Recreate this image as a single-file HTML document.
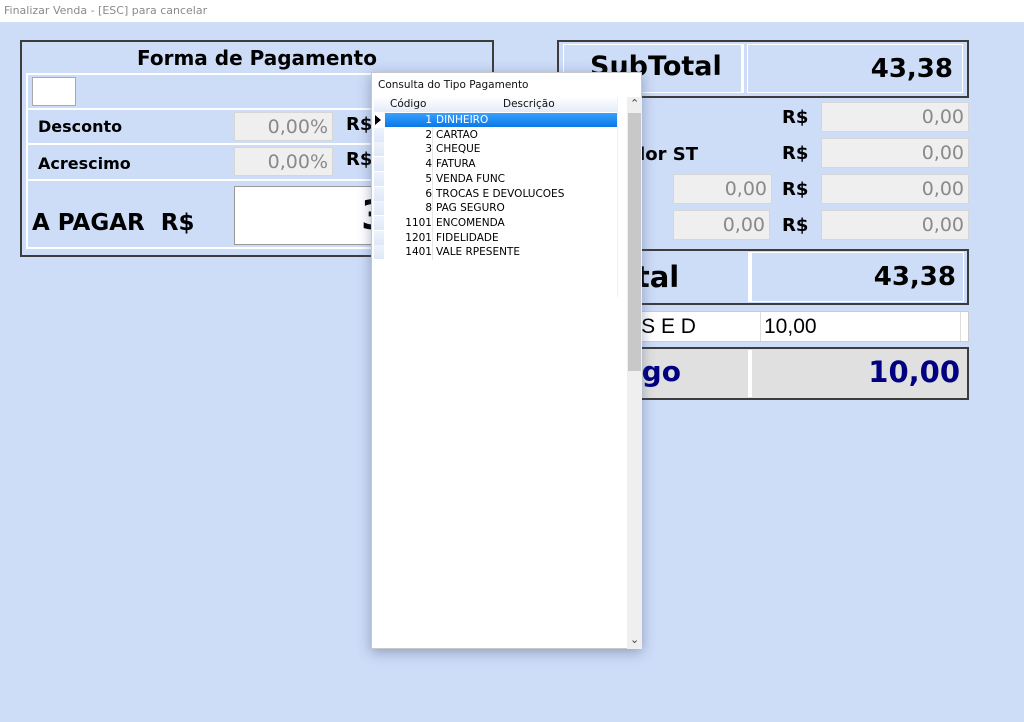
<!DOCTYPE html>
<html><head><meta charset="utf-8"><style>
*{margin:0;padding:0;box-sizing:border-box}
body{width:1024px;height:722px;background:#cddcf7;font-family:"Liberation Sans",sans-serif;position:relative;overflow:hidden}
.a{position:absolute}
.title{left:0;top:0;width:1024px;height:22px;background:#fff;color:#8a8a8a;line-height:22px;padding-left:4px;font-family:"DejaVu Sans",sans-serif;font-size:11px}
.box{border:2px solid #3c3c3c}
.wl{background:#fff}
.inp{background:#efefef;border:1px solid #d6d6d6;color:#8a8a8a;font-size:19px;text-align:right;padding-right:4px;line-height:28px;font-family:"DejaVu Sans",sans-serif}
.b{font-weight:bold;color:#000;font-family:"DejaVu Sans",sans-serif;white-space:nowrap}
.pop{left:371px;top:72px;width:271px;height:577px;background:#fff;box-shadow:0 3px 12px rgba(60,80,120,.45);border:1px solid #c8c8c8;font-family:"DejaVu Sans",sans-serif;font-size:10.5px}
.row{position:absolute;left:2px;width:244px;height:14.7px;line-height:14.7px}
.ind{position:absolute;left:0;width:10px;height:14px;background:linear-gradient(#eef3fc,#dfe8f7)}
.cd{position:absolute;left:12px;width:46px;text-align:right}
.ds{position:absolute;left:62px}
</style></head><body>
<div class="a title">Finalizar Venda - [ESC] para cancelar</div>

<!-- left panel -->
<div class="a box" style="left:20px;top:40px;width:474px;height:217px"></div>
<div class="a b" style="left:20px;top:46px;width:474px;text-align:center;font-size:20px">Forma de Pagamento</div>
<div class="a wl" style="left:26px;top:73px;width:462px;height:2px"></div>
<div class="a wl" style="left:26px;top:108px;width:462px;height:2px"></div>
<div class="a wl" style="left:26px;top:143px;width:462px;height:2px"></div>
<div class="a wl" style="left:26px;top:179px;width:462px;height:2px"></div>
<div class="a wl" style="left:26px;top:247px;width:462px;height:2px"></div>
<div class="a wl" style="left:26px;top:73px;width:2px;height:176px"></div>
<div class="a" style="left:32px;top:77px;width:44px;height:29px;background:#fff;border:1px solid #aaa"></div>
<div class="a b" style="left:38px;top:117px;font-size:16px">Desconto</div>
<div class="a inp" style="left:234px;top:112px;width:99px;height:29px">0,00%</div>
<div class="a b" style="left:346px;top:114px;font-size:18px">R$</div>
<div class="a b" style="left:38px;top:154px;font-size:16px">Acrescimo</div>
<div class="a inp" style="left:234px;top:147px;width:99px;height:29px">0,00%</div>
<div class="a b" style="left:346px;top:149px;font-size:18px">R$</div>
<div class="a b" style="left:32px;top:210px;font-size:23px">A PAGAR&nbsp; R$</div>
<div class="a" style="left:234px;top:186px;width:160px;height:59px;background:#fff;border:1px solid #999;overflow:hidden"><span class="b" style="position:absolute;left:126px;top:6px;font-size:40px">3</span></div>

<!-- right panel -->
<div class="a box" style="left:557px;top:40px;width:412px;height:58px"></div>
<div class="a" style="left:563px;top:44px;width:181px;height:49px;border:1px solid #fff;border-right:3px solid #fff"></div>
<div class="a" style="left:747px;top:44px;width:216px;height:49px;border:1px solid #fff"></div>
<div class="a b" style="left:590px;top:51px;font-size:27px">SubTotal</div>
<div class="a b" style="left:760px;top:54px;width:193px;text-align:right;font-size:26px">43,38</div>

<div class="a b" style="left:782px;top:107px;font-size:18px">R$</div>
<div class="a inp" style="left:821px;top:102px;width:148px;height:30px">0,00</div>
<div class="a b" style="left:614px;top:144px;font-size:18px">Valor ST</div>
<div class="a b" style="left:782px;top:143px;font-size:18px">R$</div>
<div class="a inp" style="left:821px;top:138px;width:148px;height:30px">0,00</div>
<div class="a inp" style="left:673px;top:174px;width:99px;height:30px">0,00</div>
<div class="a b" style="left:782px;top:179px;font-size:18px">R$</div>
<div class="a inp" style="left:821px;top:174px;width:148px;height:30px">0,00</div>
<div class="a inp" style="left:673px;top:210px;width:97px;height:30px">0,00</div>
<div class="a b" style="left:782px;top:215px;font-size:18px">R$</div>
<div class="a inp" style="left:821px;top:210px;width:148px;height:30px">0,00</div>

<div class="a box" style="left:557px;top:249px;width:412px;height:56px"></div>
<div class="a" style="left:748px;top:252px;width:3px;height:50px;background:#fff"></div>
<div class="a" style="left:751px;top:252px;width:213px;height:50px;border:1px solid #fff"></div>
<div class="a b" style="left:600px;top:260px;font-size:29px">Total</div>
<div class="a b" style="left:760px;top:262px;width:196px;text-align:right;font-size:26px">43,38</div>

<div class="a" style="left:560px;top:311px;width:409px;height:31px;background:#fff;border:1px solid #ccc"></div>
<div class="a" style="left:760px;top:312px;width:1px;height:29px;background:#ddd"></div>
<div class="a" style="left:960px;top:312px;width:1px;height:29px;background:#ddd"></div>
<div class="a" style="left:603px;top:315px;font-size:21px;color:#000">T E S E D</div>
<div class="a" style="left:764px;top:315px;font-size:21px;color:#000">10,00</div>

<div class="a box" style="left:557px;top:347px;width:412px;height:53px;background:#e0e0e0"></div>
<div class="a" style="left:748px;top:350px;width:4px;height:47px;background:#fff"></div>
<div class="a b" style="left:603px;top:355px;font-size:28px;color:#000080">Pago</div>
<div class="a b" style="left:760px;top:355px;width:200px;text-align:right;font-size:29px;color:#000080">10,00</div>

<!-- popup -->
<div class="a pop">
  <div class="a" style="left:6px;top:6px;font-size:10.5px;color:#111">Consulta do Tipo Pagamento</div>
  <div class="a" style="left:2px;top:24px;width:244px;height:15px;background:linear-gradient(#fff,#e4ebf8);"></div>
  <div class="a" style="left:18px;top:25px;color:#111">Código</div>
  <div class="a" style="left:131px;top:25px;color:#111">Descrição</div>
  <div class="a" style="left:60px;top:40px;width:1px;height:147px;background:#e6e6e6"></div>
  <div class="row" style="top:40px"><div class="ind" style="background:#fff"></div><div style="position:absolute;left:1px;top:2px;width:0;height:0;border-top:5px solid transparent;border-bottom:5px solid transparent;border-left:6px solid #000"></div><div style="position:absolute;left:11px;width:233px;height:14px;background:linear-gradient(#3aa0ff,#0a78e6);color:#fff"><span class="cd" style="left:1px">1</span><span class="ds" style="left:51px">DINHEIRO</span></div></div>
  <div class="row" style="top:54.7px"><div class="ind"></div><span class="cd">2</span><span class="ds">CARTAO</span></div>
  <div class="row" style="top:69.4px"><div class="ind"></div><span class="cd">3</span><span class="ds">CHEQUE</span></div>
  <div class="row" style="top:84.1px"><div class="ind"></div><span class="cd">4</span><span class="ds">FATURA</span></div>
  <div class="row" style="top:98.8px"><div class="ind"></div><span class="cd">5</span><span class="ds">VENDA FUNC</span></div>
  <div class="row" style="top:113.5px"><div class="ind"></div><span class="cd">6</span><span class="ds">TROCAS E DEVOLUCOES</span></div>
  <div class="row" style="top:128.2px"><div class="ind"></div><span class="cd">8</span><span class="ds">PAG SEGURO</span></div>
  <div class="row" style="top:142.9px"><div class="ind"></div><span class="cd">1101</span><span class="ds">ENCOMENDA</span></div>
  <div class="row" style="top:157.6px"><div class="ind"></div><span class="cd">1201</span><span class="ds">FIDELIDADE</span></div>
  <div class="row" style="top:172.3px"><div class="ind"></div><span class="cd">1401</span><span class="ds">VALE RPESENTE</span></div>
  <div class="a" style="left:245px;top:24px;width:1px;height:200px;background:#f0f0f0"></div>
  <div class="a" style="left:255px;top:24px;width:15px;height:552px;background:#efefef"></div>
  <div class="a" style="left:256px;top:40px;width:13px;height:258px;background:#c8c8c8"></div>
  <div class="a" style="left:258px;top:24px;font-size:11px;color:#444">&#8963;</div>
  <div class="a" style="left:258px;top:560px;font-size:11px;color:#444">&#8964;</div>
</div>
</body></html>
